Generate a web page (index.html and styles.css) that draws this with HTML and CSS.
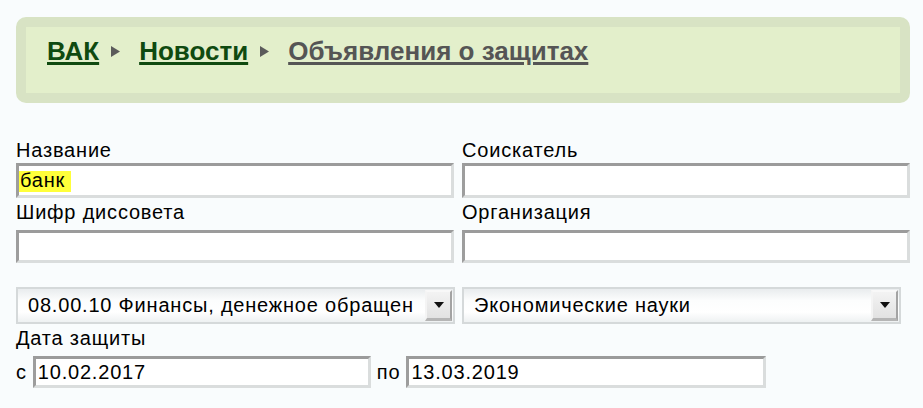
FILE: index.html
```html
<!DOCTYPE html>
<html lang="ru">
<head>
<meta charset="UTF-8" />
<meta name="viewport" content="width=device-width, initial-scale=1" />
<title>Объявления о защитах</title>
<link rel="stylesheet" href="styles.css">
</head>
<body>

<div class="page">
  <div class="crumbs">
    <a href="#" class="crumb">ВАК</a>
    <span class="sep"><svg width="9" height="11" viewBox="0 0 9 11"><path d="M0 0L9 5.5L0 11z"/></svg></span>
    <a href="#" class="crumb">Новости</a>
    <span class="sep"><svg width="9" height="11" viewBox="0 0 9 11"><path d="M0 0L9 5.5L0 11z"/></svg></span>
    <a href="#" class="crumb crumb-current">Объявления о защитах</a>
  </div>

  <form class="search" id="searchForm">
    <div class="fields">
      <div class="cell">
        <label for="title">Название</label>
        <input type="text" id="title" class="field field-found" value="банк" />
      </div>
      <div class="cell">
        <label for="applicant">Соискатель</label>
        <input type="text" id="applicant" class="field" />
      </div>
      <div class="cell cell-low">
        <label for="council">Шифр диссовета</label>
        <input type="text" id="council" class="field field-short" />
      </div>
      <div class="cell cell-low">
        <label for="org">Организация</label>
        <input type="text" id="org" class="field field-short" />
      </div>
    </div>

    <div class="selects">
      <div class="select" id="speciality">
        <span class="select-value">08.00.10 Финансы, денежное обращен</span>
        <span class="select-btn"><svg width="10" height="6" viewBox="0 0 10 6"><path d="M0 0H10L5 6z"/></svg></span>
      </div>
      <div class="select" id="branch">
        <span class="select-value">Экономические науки</span>
        <span class="select-btn"><svg width="10" height="6" viewBox="0 0 10 6"><path d="M0 0H10L5 6z"/></svg></span>
      </div>
    </div>

    <div class="date-label">Дата защиты</div>
    <div class="dates">
      <label for="dateFrom">с</label>
      <input type="text" id="dateFrom" class="field field-date date-from" value="10.02.2017" />
      <label for="dateTo">по</label>
      <input type="text" id="dateTo" class="field field-date date-to" value="13.03.2019" />
    </div>
  </form>
</div>

</body>
</html>
```

FILE: styles.css
```css
body {
  margin: 0;
  padding: 0;
  background: #f9fcfd;
  font-family: 'Liberation Sans', Arial, sans-serif;
  color: #000;
}
.page {
  padding: 17px 13px 0 16px;
}
.crumbs {
  display: flex;
  align-items: center;
  height: 30px;
  padding: 9px 21px 27px;
  background: #e3efcb;
  border: 10px solid #d8e3c4;
  border-radius: 10px;
  font-size: 26px;
  font-weight: 700;
  line-height: 30px;
}
.crumb {
  color: #0f4a10;
  text-decoration: underline;
  text-decoration-thickness: 3px;
  text-underline-offset: 2px;
}
.crumb-current {
  color: #555;
}
.sep {
  display: flex;
  margin: 1px 19px 0 12px;
}
.sep svg {
  fill: #5b5b5b;
}
.search {
  margin-top: 36px;
}
label, .date-label {
  display: block;
  font-size: 20px;
  line-height: 22px;
  letter-spacing: 0.8px;
}
.fields {
  display: grid;
  grid-template-columns: 438px 448px;
  column-gap: 8px;
}
.field {
  display: block;
  box-sizing: border-box;
  width: 100%;
  height: 35px;
  margin: 2px 0 0;
  padding: 0 2px 0 1px;
  border: 3px solid;
  border-color: #9b9b9b #dadddd #dadddd #9d9d9d;
  background: #fff;
  font-family: 'Liberation Sans', Arial, sans-serif;
  font-size: 20px;
  letter-spacing: 0.8px;
  color: #000;
  outline: none;
}
.field-found {
  background: linear-gradient(#ffff3a, #ffff3a) no-repeat 0 5px / 52px 21px, #fff;
}
.cell-low label {
  margin-top: 3px;
}
.field-short {
  height: 33px;
  margin-top: 7px;
}
.selects {
  display: grid;
  grid-template-columns: 439px 439px;
  column-gap: 7px;
  margin-top: 24px;
}
.select {
  display: flex;
  align-items: center;
  box-sizing: border-box;
  height: 37px;
  padding: 1px;
  border: 2px solid #d5d9da;
  background: linear-gradient(#e9ecee, #fcfdfd 35%, #fff 70%, #eef1f2);
  font-size: 20px;
  letter-spacing: 0.8px;
  cursor: pointer;
}
.select-value {
  flex: 1;
  min-width: 0;
  margin-right: 8px;
  padding-left: 9px;
  overflow: hidden;
  white-space: nowrap;
}
.select-btn {
  box-sizing: border-box;
  width: 27px;
  height: 31px;
  display: flex;
  align-items: center;
  justify-content: center;
  border: 2px solid;
  border-color: #f8f8f8 #a3a3a3 #b5b5b5 #f4f4f4;
  border-bottom-width: 3px;
  background: linear-gradient(#f3f3f3, #e2e2e2);
}
.select-btn svg {
  fill: #111;
}
.date-label {
  margin-top: 3px;
}
.dates {
  display: flex;
  align-items: center;
  gap: 6px;
  margin-top: 7px;
}
.field-date {
  height: 32px;
  margin: 0;
  padding-left: 2px;
}
.date-from {
  width: 338px;
}
.date-to {
  width: 360px;
}
```
